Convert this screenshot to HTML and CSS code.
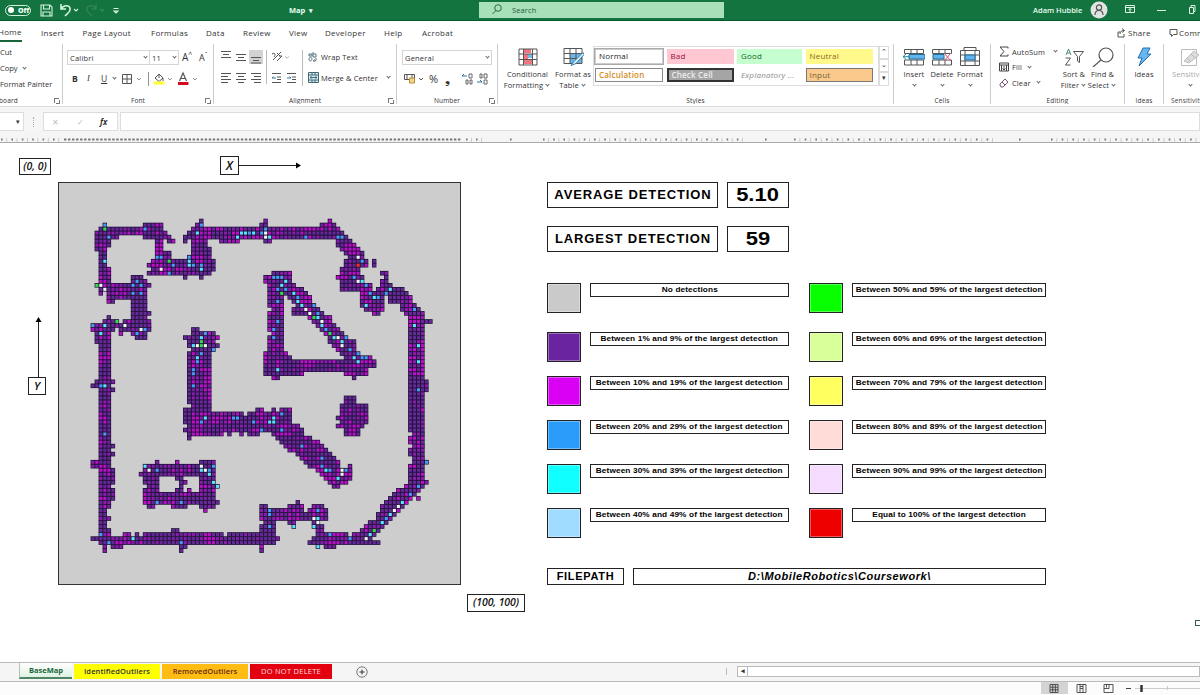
FILE: index.html
```html
<!DOCTYPE html>
<html lang="en">
<head>
<meta charset="utf-8">
<title>Map</title>
<link rel="stylesheet" href="styles.css">
</head>
<body>
<div class="app">
  <header class="titlebar">
    <span class="toggle"><i></i><b>Off</b></span>
    <svg class="qat" width="85" height="20" viewBox="38 0 85 20" fill="none" stroke="#d6f3df" stroke-width="1.1">
      <path d="M41 5h9l2 2v9H41zM43.500 5v4h6V5M43 16v-4h7v4"/>
      <path d="M61 4v5h5M61 9c3-5 10-4 9 1-.3 2-3 4-5 6" stroke-width="1.600"/><path d="M74 9l2 2 2-2"/>
      <path d="M96 4v5h-5M96 9c-3-5-10-4-9 1 .3 2 3 4 5 6M100 9l2 2 2-2" stroke="#39885a"/>
      <path d="M113.500 8.500h5M114 11l2 2 2-2z"/>
    </svg>
    <span class="doc">Map</span><span class="caret">▾</span>
    <div class="search"><svg width="10" height="11" viewBox="0 0 10 11" fill="none" stroke="#246b41"><circle cx="6" cy="4" r="3.300"/><path d="M4 6.500L.5 10"/></svg><span>Search</span></div>
    <span class="user">Adam Hubble</span>
    <svg class="avatar" width="18" height="18" viewBox="0 0 18 18"><circle cx="9" cy="9" r="8.500" fill="#e1e5e1"/><g fill="none" stroke="#555" stroke-width="1.200"><circle cx="9" cy="6.500" r="2.600"/><path d="M5 14c0-6 8-6 8 0"/></g></svg>
    <svg class="winbtns" width="76" height="20" viewBox="1124 0 76 20" fill="none" stroke="#dff5e6"><path d="M1125.500 5.500h9v7h-9zM1125.500 7.500h9M1130 12V8.500M1128.500 10l1.500-1.500 1.500 1.500M1157 10.500h9M1189.500 7.500h4v6h-4zM1191 7V5.500h4v6h-1.500"/></svg>
  </header>

  <nav class="tabs">
    <span class="active">Home</span><span>Insert</span><span>Page Layout</span><span>Formulas</span><span>Data</span><span>Review</span><span>View</span><span>Developer</span><span>Help</span><span>Acrobat</span>
    <svg width="10" height="10" viewBox="0 0 10 10" fill="none" stroke="#555"><path d="M3 4H1v5h6V6M3 6c0-3 2-3.500 4-3.500M5 .5l2.500 2L5 4.500"/></svg><span>Share</span>
    <svg width="10" height="10" viewBox="0 0 10 10" fill="none" stroke="#555"><path d="M1 1.500h7v5H4.500L2.500 8.500v-2H1z"/></svg><span>Comments</span>
  </nav>

  <section class="ribbon">
    <div class="group clipboard">
      <div class="body"><span>Cut</span><span>Copy <i class="dn"></i></span><span>Format Painter</span></div>
      <footer><span>Clipboard</span><i class="launch"></i></footer>
    </div>
    <div class="group font">
      <div class="body">
        <div class="row one"><span class="combo">Calibri<i class="dn"></i></span><span class="combo">11<i class="dn"></i></span><span class="big">A<sup>^</sup></span><span class="big small">A<sup>ˇ</sup></span></div>
        <div class="row two"><b>B</b><em>I</em><u>U</u><i class="dn"></i>
          <svg width="82" height="16" viewBox="128 69 82 16" fill="none" stroke="#555"><path d="M130.500 73.500h9v9h-9zM135 73.500v9M130.500 78h9" /><path d="M145 77l2 2 2-2M176 77l2 2 2-2M201 77l2 2 2-2M156.500 71v14" stroke="#777" stroke-width=".8"/><path d="M163 77l4-4 4 4-4 3.500zM167 73v4M171 77v3"/><path d="M161.500 82h11" stroke="#ffff32" stroke-width="3"/><path d="M187.500 80l3.500-8 3.500 8M189 77.500h4" stroke-width="1.200"/><path d="M186 82.500h10.500" stroke="#d80820" stroke-width="3"/></svg>
        </div>
      </div>
      <footer><span>Font</span><i class="launch"></i></footer>
    </div>
    <div class="group align">
      <div class="body">
        <svg width="90" height="44" viewBox="216 46 90 44" fill="none" stroke="#555">
          <path fill="#d2d2d2" stroke="none" d="M249 50h14v14h-14z"/>
          <path d="M221 51.500h10M223 54.500h6M221 57.500h10M236 54.500h10M238 57.500h6M236 60.500h10M251 57.500h10M253 60.500h6M251 63h10"/>
          <path d="M221 73.500h10M221 76.500h7M221 79.500h10M221 82.500h7M236 73.500h10M238 76.500h6M236 79.500h10M238 82.500h6M251 73.500h10M254 76.500h7M251 79.500h10M254 82.500h7"/>
          <path d="M272 73.500h9M277 77h4M277 79.500h4M272 82.500h9M287 73.500h9M292 77h4M292 79.500h4M287 82.500h9"/><path d="M276 78h-4l1.500-1.500M287 78h4l-1.500-1.500" stroke="#28769c"/>
          <path d="M273 60l8-8M277 61l5-5h-3M272 54c3-2 4 1 2 3M277 53l3 3" /><path d="M285 56.500l2 1.800 2-1.800M266.500 50v34M302.500 50v36" stroke="#999" stroke-width=".7"/>
        </svg>
        <div class="lines">
          <span><svg width="11" height="12" viewBox="0 0 11 12" fill="none" stroke="#52727d"><path d="M1 3h3v2H1zM5 1v5h3V3H5M1 8c0-2 3-2 3 0s-3 3-3 0M8 7v2c0 2-3 1-3 1l2-1.500"/></svg>Wrap Text</span>
          <span><svg width="11" height="11" viewBox="0 0 11 11" fill="#d4f1f6" stroke="#456570"><path d="M.5.5h10v10H.5zM.5 3h10M.5 8h10M4 .5V3M7 .5V3M4 8v2.500M7 8v2.500M2 5.500h7M3.500 4.500L2 5.500l1.500 1M7.500 4.500L9 5.500l-1.500 1"/></svg>Merge &amp; Center<i class="dn"></i></span>
        </div>
      </div>
      <footer><span>Alignment</span><i class="launch"></i></footer>
    </div>
    <div class="group number">
      <div class="body">
        <span class="combo">General<i class="dn"></i></span>
        <div class="numrow">
          <svg width="22" height="12" viewBox="0 0 22 12" fill="none" stroke="#555"><path d="M.5 1.500h10v5H.5zM3 1.500v5M8 1.500v5"/><path d="M5.500 5h5v5h-5z" fill="#f3d48a" stroke="#b88b35"/><path d="M15 5l2 2 2-2"/></svg>
          <span class="pct">%</span><span class="comma">❟</span>
          <svg width="28" height="12" viewBox="0 0 28 12" fill="none" stroke="#555"><path d="M7 1h3v4H7zM4 7h2v4H4zM8 7h2v4H8zM18 1h2v4h-2zM22 1h3v4h-3zM22 7h3v4h-3z" stroke-width=".9"/><path d="M5 3H0l2-2M15 9h5l-2-2" stroke="#28769c"/></svg>
        </div>
      </div>
      <footer><span>Number</span><i class="launch"></i></footer>
    </div>
    <div class="group styles">
      <div class="body">
        <div class="bigbtn cond"><svg width="20" height="18" viewBox="0 0 20 18"><path fill="#fff" d="M1 1h18v16H1z"/><path fill="#ef7580" d="M5 1h8v4H5zM5 6h5v5H5zM5 12h9v4H5z"/><path fill="#79b8e8" d="M10 6h5v4h-5z"/><path d="M1 1h18v16H1zM5.500 1v16M14.500 1v16M1 6h18M1 11.500h18" fill="none" stroke="#555"/></svg><span>Conditional<br>Formatting <i class="dn"></i></span></div>
        <div class="bigbtn tbl"><svg width="21" height="19" viewBox="0 0 21 19"><path fill="#fff" d="M1 1h18v15H1z"/><path fill="#6bb5e7" d="M7 6h12v10H7z"/><path d="M1 1h18v15H1zM7 1v15M13 1v15M1 6h18M1 11h18" fill="none" stroke="#555"/><path d="M20 5l-9 9-3 4 5-2 8-9z" fill="#dceffc" stroke="#3a7fb0"/></svg><span>Format as<br>Table <i class="dn"></i></span></div>
        <div class="gallery">
          <span class="normal">Normal</span><span class="bad">Bad</span><span class="good">Good</span><span class="neutral">Neutral</span>
          <span class="calc">Calculation</span><span class="check">Check Cell</span><span class="expl">Explanatory ...</span><span class="input">Input</span>
        </div>
        <div class="scroller"><i>⌃</i><i>⌄</i><i>▾</i></div>
      </div>
      <footer><span>Styles</span></footer>
    </div>
    <div class="group cells">
      <div class="body">
        <div class="bigbtn"><svg width="22" height="18" viewBox="0 0 22 18" fill="none" stroke="#555"><path d="M1.500 1.500h19v4h-19zM1.500 12h19v5h-19zM8 1.500v4M14 1.500v4M8 12v5M14 12v5"/><path d="M6 6.500h16v4.500H6z" fill="#60b5ef" stroke="#256da0"/><path d="M7 8.700H0L3 6M0 8.700l3 2.500" stroke="#278c94"/></svg><span>Insert<br><i class="dn"></i></span></div>
        <div class="bigbtn"><svg width="22" height="18" viewBox="0 0 22 18" fill="none" stroke="#555"><path d="M1.500 1.500h19v4h-19zM1.500 12h19v5h-19zM8 1.500v4M14 1.500v4M8 12v5M14 12v5"/><path d="M2 6.500h11v4.500H2z" fill="#60b5ef" stroke="#256da0"/><path d="M13 5l7 8M20 5l-7 8" stroke="#d8557b"/></svg><span>Delete<br><i class="dn"></i></span></div>
        <div class="bigbtn"><svg width="22" height="20" viewBox="0 0 22 20" fill="none" stroke="#555"><path d="M5 3V.5h12V3M1.500 3.500h19v15h-19zM6 3.500v15M16 3.500v15M1.500 8h19M1.500 14h19"/><path d="M6 8h10v5H6z" fill="#60b5ef" stroke="#256da0"/></svg><span>Format<br><i class="dn"></i></span></div>
      </div>
      <footer><span>Cells</span></footer>
    </div>
    <div class="group editing">
      <div class="body">
        <div class="lines">
          <span><svg width="10" height="11" viewBox="0 0 10 11" fill="none" stroke="#444"><path d="M9 2.500V1H1l4 4.500L1 10h8V8.500"/></svg>AutoSum<i class="dn far"></i></span>
          <span><svg width="10" height="10" viewBox="0 0 10 10" fill="none" stroke="#444"><path d="M.5 1h9v8h-9zM.5 3h9M5 4v4M3.500 6.500L5 8l1.500-1.500M2.500 3v6M7.500 3v6"/></svg>Fill<i class="dn"></i></span>
          <span><svg width="10" height="10" viewBox="0 0 10 10" fill="none" stroke="#765078"><path d="M1 6l5-5 3 3-5 5H2L1 7zM3 4l3 3"/></svg>Clear<i class="dn"></i></span>
        </div>
        <div class="bigbtn"><svg width="20" height="20" viewBox="0 0 20 20" fill="none" stroke="#555"><path d="M2 8l2.500-6L7 8M3 6h3" stroke="#4b8c78"/><path d="M1.500 11h5l-5 7h5M9.500 4.500h10l-4 5v6l-2-1.500V9.500z"/></svg><span>Sort &amp;<br>Filter <i class="dn"></i></span></div>
        <div class="bigbtn"><svg width="22" height="20" viewBox="0 0 22 20" fill="none" stroke="#555" stroke-width="1.200"><circle cx="14" cy="8" r="7"/><path d="M9 13l-8 7"/></svg><span>Find &amp;<br>Select <i class="dn"></i></span></div>
      </div>
      <footer><span>Editing</span></footer>
    </div>
    <div class="group ideas">
      <div class="body"><div class="bigbtn"><svg width="16" height="20" viewBox="0 0 16 20"><path d="M7 1h7l-3 6h4L3 19l3-8H2z" fill="#69b5f0" stroke="#226fae"/></svg><span>Ideas</span></div></div>
      <footer><span>Ideas</span></footer>
    </div>
    <div class="group sens">
      <div class="body"><div class="bigbtn"><svg width="20" height="20" viewBox="0 0 20 20" fill="none" stroke="#bbb"><path d="M1.500 2.500h15v16h-15z"/><path d="M4 14L14 4l5 4-10 8z" fill="#ddd"/><path d="M7 11l4 4M11 7l5 4"/></svg><span>Sensitivity<br><i class="dn"></i></span></div></div>
      <footer><span>Sensitivity</span></footer>
    </div>
  </section>

  <section class="formula">
    <div class="namebox">▾</div><i class="grip"></i>
    <div class="fx"><span>✕</span><span>✓</span><em>fx</em></div>
    <div class="entry"></div>
  </section>
  <svg class="ruler" id="ruler" width="1200" height="12"></svg>

  <main class="sheet">
    <section class="plot">
      <div class="axis-x"><span class="tag">(0, 0)</span><span class="tag axis">X</span><svg width="62" height="8" viewBox="0 0 62 8"><path d="M0 4.500h58" stroke="#222"/><path d="M57 1.500l5 3-5 3z"/></svg></div>
      <div class="plot-row">
        <div class="axis-y"><svg width="8" height="60" viewBox="0 0 8 60"><path d="M4.500 60V4" stroke="#222"/><path d="M1.500 5l3-5 3 5z"/></svg><span class="tag axis">Y</span></div>
        <svg class="map" id="map" width="403" height="403" viewBox="0 0 403 403"></svg>
      </div>
      <span class="tag end">(100, 100)</span>
    </section>
    <section class="info">
      <div class="stat"><b>AVERAGE DETECTION</b><strong><span>5.10</span></strong></div>
      <div class="stat"><b>LARGEST DETECTION</b><strong><span>59</span></strong></div>
      <div class="legend">
        <i class="sw none"></i><p><span>No detections</span></p><i class="sw p50"></i><p><span>Between 50% and 59% of the largest detection</span></p>
        <i class="sw p1"></i><p><span>Between 1% and 9% of the largest detection</span></p><i class="sw p60"></i><p><span>Between 60% and 69% of the largest detection</span></p>
        <i class="sw p10"></i><p><span>Between 10% and 19% of the largest detection</span></p><i class="sw p70"></i><p><span>Between 70% and 79% of the largest detection</span></p>
        <i class="sw p20"></i><p><span>Between 20% and 29% of the largest detection</span></p><i class="sw p80"></i><p><span>Between 80% and 89% of the largest detection</span></p>
        <i class="sw p30"></i><p><span>Between 30% and 39% of the largest detection</span></p><i class="sw p90"></i><p><span>Between 90% and 99% of the largest detection</span></p>
        <i class="sw p40"></i><p><span>Between 40% and 49% of the largest detection</span></p><i class="sw p100"></i><p><span>Equal to 100% of the largest detection</span></p>
      </div>
      <div class="path"><b>FILEPATH</b><em>D:\MobileRobotics\Coursework\</em></div>
    </section>
    <i class="cellcursor"></i>
  </main>

  <section class="sheettabs">
    <span class="t base">BaseMap</span><span class="t yellow">IdentifiedOutliers</span><span class="t orange">RemovedOutliers</span><span class="t red">DO NOT DELETE</span>
    <svg class="add" width="12" height="12" viewBox="0 0 12 12" fill="none" stroke="#777"><circle cx="6" cy="6" r="5.200"/><path d="M3.500 6h5M6 3.500v5" stroke="#333"/></svg>
    <i class="sep"></i><div class="hscroll"><b>◂</b></div>
  </section>
  <footer class="status">
    <svg width="160" height="13" viewBox="1040 0 160 13" fill="none" stroke="#444"><path fill="#d4d4d4" stroke="none" d="M1041 0h27v12h-27z"/><path d="M1050 2.500h8v8h-8zM1052.700 2.500v8M1055.400 2.500v8M1050 5.200h8M1050 7.800h8M1077 2.500h9v8h-9zM1080 2v8.500M1083 2v8.500M1080 4.500h3M1080 6.500h3M1104 2.500h9v8h-9zM1104 6.500h5v-4M1106.500 2.500v3" stroke-width=".9"/><path d="M1126 6.500h5"/><path d="M1135 6.500h65M1167.500 4v4" stroke="#ccc"/><path d="M1141.500 3v7" stroke="#333" stroke-width="2.500"/></svg>
  </footer>
</div>
<script src="map.js"></script>
</body>
</html>
```

FILE: styles.css
```css
*{box-sizing:border-box}
body{margin:0;background:#fff;overflow:hidden;font-family:"Open Sans","Noto Sans",sans-serif;color:#333;font-size:8px}
i,em{font-style:normal}
.app{width:1200px;height:695px;display:flex;flex-direction:column;overflow:hidden}
.app>*{flex:none}
svg{display:block;flex:none}
.titlebar{height:21px;background:#13743f;border-bottom:1px solid #075a2b;display:flex;align-items:center;color:#e8fff0;white-space:nowrap;font-weight:600;font-size:7.5px}
.toggle{margin-left:5px;width:26px;height:11px;border:1px solid #d4f0dd;border-radius:6px;display:flex;align-items:center;gap:4px;padding-left:2px;font-size:7px}
.toggle i{width:6px;height:6px;border-radius:50%;background:#fff}
.qat{margin-left:7px}
.doc{margin-left:166px;width:20px;font-weight:700}
.caret{width:8px;font-size:7px}
.search{margin-left:162px;width:245px;height:16px;background:#a8e0ba;display:flex;align-items:center;color:#235c3a;gap:10px;padding-left:13px;font-weight:400;margin-top:-1px;letter-spacing:.1px}
.user{margin-left:309px;width:57px}
.avatar{margin-right:16px}
.tabs{height:23px;display:grid;grid-template-columns:41px 41.500px 68.500px 55px 37px 46px 36px 59px 38px 695px 11px 41px 10px 40px;align-items:center;letter-spacing:.27px;white-space:nowrap}
.tabs .active{margin-left:-2px;width:24px;height:18px;line-height:16px;border-bottom:2px solid #17653b}
.ribbon{height:63px;display:flex;border-bottom:1px solid #ddd;white-space:nowrap}
.group{border-right:1px solid #ccc;display:flex;flex-direction:column;height:60px;overflow:hidden;flex:none}
.group .body{height:51px;flex:none;display:flex}
.group footer{height:11px;line-height:11px;font-size:6.5px;display:flex;justify-content:center;position:relative;letter-spacing:.15px}
.launch{position:absolute;right:3px;top:3px;width:5px;height:5px;border:solid #777;border-width:1px 0 0 1px}
.launch::after{content:"";position:absolute;right:-1px;bottom:-1px;width:3px;height:3px;border:solid #777;border-width:0 1px 1px 0}
.dn{display:inline-block;width:3px;height:3px;border:solid #666;border-width:0 .8px .8px 0;transform:rotate(45deg);margin:0 2px 2px 3px}
.clipboard{width:63px}
.clipboard .body{flex-direction:column;line-height:16px;font-size:7.5px}
.clipboard footer{justify-content:flex-start}
.clipboard footer span{margin-left:-13px}
.font{width:151px}.font .body{display:block;padding:6px 0 0 4px}
.row{display:flex;align-items:center}
.combo{display:flex;justify-content:space-between;align-items:center;border:1px solid #d5d5d5;height:15px;padding-left:2px;font-size:7.5px;letter-spacing:.2px}
.one .combo:first-child{width:83px}.one .combo:nth-child(2){width:29px;border-left:0}
.big{font-size:10px;margin-left:3px;line-height:15px;width:14px}.big sup{font-size:7px;line-height:0}.big.small{font-size:9px}
.two{height:26px;font-size:8.500px;padding-left:5px}
.two b{width:15px}.two em{width:14px;font-style:italic;font-family:"Liberation Serif",serif}.two u{width:9px}.two svg{margin-left:2px}
.align{width:183px}.align .body{padding:2px 0 0 2px;gap:2px}
.lines{display:flex;flex-direction:column;font-size:7.5px}
.lines>span{display:flex;align-items:center;height:21px;gap:2px;letter-spacing:.12px}
.align .dn{margin-left:7px}
.number{width:101px}.number .body{flex-direction:column;padding:6px 0 0 5px}
.number .combo{width:90px}
.numrow{display:flex;align-items:center;height:27px;padding-left:2px}
.pct{font-size:11px;width:16px;margin-left:3px}.comma{font-size:13px;width:17px;font-family:"DejaVu Sans",sans-serif}
.styles{width:396px}
.styles .body{padding-top:3px}
.bigbtn{display:flex;flex-direction:column;align-items:center;text-align:center;gap:2px;line-height:10.500px;font-size:7.5px;letter-spacing:.1px}
.bigbtn svg{height:20px}
.bigbtn .dn{margin-left:1px}
.cond{width:59px}.tbl{width:32px}
.gallery{margin:-1px 0 0 4px;width:286px;height:40px;border:1px solid #ddd;display:grid;grid-template-columns:68px 67px 65px 67px;grid-template-rows:15px 14px;gap:4px 4.500px;padding:2px 1px;font-size:8px;line-height:12px;letter-spacing:.2px}
.gallery span{padding-left:3px;border:1px solid transparent}
.gallery .normal{outline:1px solid #aaa;border-color:#ccc;color:#222}
.bad{background:#ffc7d2;color:#9c1134}.good{background:#c6ffcf;color:#16622b}.neutral{background:#fff98c;color:#8a681b}
.gallery .calc{border-color:#888;color:#d48b1c;font-weight:600}.gallery .check{border:2px solid #333;background:#a5a5a5;color:#eee;font-weight:600;line-height:10px}.gallery .expl{font-style:italic;color:#8b8b8b}.gallery .input{border-color:#777;background:#fbc98c;color:#76603b}
.gallery{column-gap:3.500px}
.scroller{width:10px;height:40px;margin-top:-1px;display:grid;grid-template-rows:13px 13px 14px}
.scroller i{border:1px solid #ddd;font-size:7px;line-height:10px;text-align:center}
.cells{width:97px}.cells .body{padding:3px 0 0 6px}.cells .bigbtn{width:28px}.cells .dn,.sens .dn{margin-left:3px}
.editing{width:134px}.editing .body{padding-left:8px}.editing .lines{width:61px}.editing .lines>span{height:15.500px;gap:3px}.editing .lines .dn{margin-left:3px}.editing .lines>span:first-child .dn{margin-left:6px}.editing .bigbtn{width:29px;padding-top:3px}.editing .bigbtn:nth-child(2){width:28px}
.ideas{width:39px}.ideas .bigbtn{width:39px;padding-top:3px}
.sens{width:60px;color:#aaa;border:0}.sens .bigbtn{width:52px;padding-top:3px}.sens footer{justify-content:flex-start;padding-left:7px;color:#444}
.formula{height:24px;background:#f6f6f6;padding-top:5px;display:flex}
.formula>div{background:#fff;border:1px solid #ddd;height:19px}
.namebox{width:24px;text-align:right;padding-right:3px;line-height:17px;font-size:7px;border-left:0!important}
.grip{width:4px;border-right:1px dotted #aaa;margin:5px 8px 4px 6px}
.fx{width:75px;display:grid;grid-template-columns:25px 23px 20px;padding-left:8px;line-height:17px;color:#bbb;margin-left:1px}
.fx em{color:#333;font-style:italic;font-weight:700}
.entry{flex:1;margin-left:2px}
.ruler{background:#f5f5f5;border-bottom:1px solid #aaa}
.sheet{height:519px;display:flex;position:relative}
.plot{width:547px;display:flex;flex-direction:column;flex:none}
.tag{border:1px solid #222;font:italic 600 10.500px/14px "Open Sans","Noto Sans",sans-serif;text-align:center;color:#111;height:17px;display:block;white-space:nowrap}
.axis-x{display:flex;height:39px;padding:13px 0 0 19px;align-items:flex-start}
.axis-x .tag{width:32px;margin-top:2px}.axis-x .tag.axis{width:19px;margin:0 0 0 169px;height:19px;font-size:12px;line-height:17px}.axis-x svg{margin-top:5px}
.plot-row{display:flex;height:403px}
.axis-y{width:58px;padding:135px 0 0 28px}.axis-y svg{margin-left:6px}.axis-y .tag{width:18px;height:18px;font-size:11.500px;line-height:16px}
.tag.end{width:58px;margin:9px 0 0 467px;height:18px;line-height:15px;letter-spacing:-.1px}
.info{width:500px;padding-top:39px;font-family:"Liberation Sans",Arial,sans-serif;color:#000}
.stat{display:grid;grid-template-columns:171px 62px;gap:9px;height:26px;margin-bottom:18px;text-align:center}
.stat>*{border:1px solid #222}
.stat b{font-size:13px;line-height:24px;letter-spacing:.9px;padding-left:1px;white-space:nowrap}
.stat strong{font-size:18px;line-height:24px}
.stat strong span{display:inline-block;transform:scaleX(1.22)}
.legend{display:grid;grid-template-columns:34px 199px 45px 194px;column-gap:9px;grid-template-rows:48.500px repeat(5,44.200px);margin-top:31px}
.legend>:nth-child(4n+3){margin-left:11px;width:34px}
.legend p{margin:0;height:14px;border:1px solid #222;display:flex;justify-content:center;font-weight:700;font-size:7px;line-height:12px;white-space:nowrap}
.legend span{letter-spacing:.1px;transform:scaleX(1.18)}
.sw{height:30px;border:1px solid #222;box-shadow:inset 0 0 0 1px #ffffff55}
.none{background:#cacaca}.p1{background:#6b24a0}.p10{background:#d900f4}.p20{background:#2b9bfa}.p30{background:#10ffff}.p40{background:#a0dcff}.p50{background:#08ff00}.p60{background:#d9ff9a}.p70{background:#ffff60}.p80{background:#ffdcd8}.p90{background:#f5dcff}.p100{background:#ee0000}
.path{display:grid;grid-template-columns:77px 413px;gap:9px;height:17px;margin-top:16px;text-align:center;line-height:15px}
.path>*{border:1px solid #222}.path b{font-size:11px;letter-spacing:.7px}.path em{font-size:11px;font-weight:700;font-style:italic;letter-spacing:.57px}
.cellcursor{position:absolute;left:1195px;top:477px;width:8px;height:6px;border:1.500px solid #345c50}
.sheettabs{height:20px;border:solid #bbb;border-width:1px 0;background:#f5f5f5;display:flex;padding-left:19px;white-space:nowrap;font-size:7.5px}
.t{height:15px;margin-top:1px;line-height:14px;text-align:center;margin-right:2px}
.base{width:53px;background:linear-gradient(#fff,#dcf2e2);color:#17653b;font-weight:700;border:solid #4e8564;border-width:0 0 2px;border-left:1px solid #bbb;margin-top:0;height:16px}
.yellow{width:86px;background:#ff0}.orange{width:86px;background:#ffbd13;color:#6b2712}.red{width:82px;background:#e3000f;color:#ffdede;letter-spacing:.25px}
.yellow,.orange{letter-spacing:.12px;font-weight:600}
.add{margin:3px 0 0 22px}.sep{width:1px;height:7px;background:#bbb;margin:5px 10px 0 358px}
.hscroll{flex:1;height:11px;border:1px solid #bbb;background:#fff;margin-top:3px;line-height:8px}
.hscroll b{display:block;width:10px;border-right:1px solid #bbb;height:9px;text-align:center;font-size:7px}
.status{height:13px;background:#fcfcfc;display:flex;justify-content:flex-end}
```

FILE: map.js
```javascript
// Occupied cells of the 100 x 100 map, as inclusive column spans per row.
const spans = {
9:'35 51 67',10:'11 21-25 34-35 50-51 65-68',11:'10-25 33-69',12:'9-26 32-70',13:'9-14 21-27 31-71',14:'9-12 24-25 27-28 31 33-36 40-44 51-52 69-72',
15:'9-12 24-25 33-36 69-73',16:'9-11 24-25 33-37 70-74',17:'10-11 24-27 33-37 71-75',18:'10-11 24-27 32-37 72-75',19:'10-11 23-38 71-76 78',20:'10-11 22-38 71-76 78',
21:'10-12 23-38 70-74',22:'10-12 22-37 53-57 70-74 80-81',23:'10-12 18-20 31 35 51-57 69-75 81',24:'10-12 18-21 51-57 70-75 80-81',25:'9-22 52-58 70-77 80-82',26:'10-21 52-60 70-77 79-85',
27:'10 12-21 52-61 75-86',28:'12-21 52-55 57-62 75-80 82-87',29:'12-13 18-21 52-55 58-62 75-80 82-87',30:'18-21 52-55 59-63 75-80 85-88',31:'18-21 53-55 58-64 76-80 85-89',32:'18-22 52-55 58-60 61-65 78-79 86-90',
33:'12 18-21 52-55 62-67 87-90',34:'11-13 14 16-22 52-55 63-67 87-92',35:'8-22 52-55 64-68 87-90',36:'8-13 15-22 33-34 52-55 65-69 87-90',37:'9-12 15 18-21 33-38 53-55 66-70 87-90',38:'9-12 19-21 31-39 52-55 67-71 87-90',
39:'9-12 32-38 52-55 67-73 87-90',40:'10-12 32-39 52-55 68-73 87-90',41:'10-12 33-38 52-55 69-73 87-90',42:'10-12 32-37 51-56 70-74 87-90',43:'10-12 32-37 51-57 71-77 87-90',44:'10-12 32-37 51-78 87-90',
45:'10-12 32-37 51-78 87-90',46:'10-12 32-37 51-76 87-90',47:'10-12 32-37 51-60 71-76 87-90',48:'10-12 32-37 53-54 73 87-90',49:'9-13 32-37 87-91',50:'8-12 32-37 87-91',51:'10-13 32-37 87-91',52:'10-12 32-37 87-90',
53:'10-12 32-37 71-73 87-90',54:'10-12 32-37 71-73 87-90',55:'10-12 33-37 70-76 87-90',56:'10-12 31-37 49-50 53 55-57 70-76 87-90',57:'10-12 31-45 47-57 70-76 87-90',58:'10-12 31-57 69-76 87-90',59:'10-12 31-57 70-76 87-90',
60:'10-12 32-59 69-75 87-90',61:'10-12 31-60 71-74 87-90',62:'10-12 32-40 42 45 47-49 53-60 71-74 88-90',63:'10-12 32 54-62 87-90',64:'10-12 55-64 87-90',65:'10-13 56-65 88-90',66:'10-12 57-66 87-90',67:'10-13 59-67 87-90',
68:'10-12 60-68 88-90',69:'8-12 24 29 35-38 61-69 88-91',70:'8-12 21-38 62-69 72 87-90',71:'10-13 21-38 64-72 87-90',72:'10-13 20-38 65-72 87-90',73:'10-13 21-24 29-30 35-38 66-72 87-90',74:'10-13 21-24 30-31 35-38 67-71 87-91',
75:'10-12 22-24 30 35-39 68-69 86-90',76:'10-13 21-24 29-30 32 35-38 84-89',77:'10-13 21-38 83-88',78:'10-13 21-38 82-87 89',79:'10-12 21-39 59 81-86',80:'10-12 22-23 28-31 35-38 50-51 57-60 63-65 80-85',
81:'10-11 36 50-60 62-66 80-84',82:'10-11 50-66 79-83',83:'10-12 50-57 58-66 79-82',84:'10-11 51-53 57-58 63-64 77-81',85:'10-11 50-53 58 63-65 76-80',86:'10-12 28-29 50-53 64-65 75-79',87:'10-12 16-17 19 21-40 42-53 64-71 73-78',
88:'8-54 63-77',89:'10-53 62-79',90:'11 13-15 30-31 50 64 66-68',91:'11 30 50'};

// Cells above the 20% bands, by colour class: column,row pairs.
const marks = {
b:'11,10 12,13 21,11 18,25 19,24 20,25 20,27 18,27 24,18 25,18 28,20 27,22 32,18 33,20 35,20 35,10 47,12 8,35 21,36 19,37 36,37 38,41 35,42 34,44 33,46 33,47 33,50 51,11 61,13 69,13 70,13 75,19 73,23 76,25 77,27 79,28 81,27 88,31 53,23 54,23 55,23 54,26 56,26 54,29 59,28 63,30 64,32 66,36 71,38 72,41 74,42 75,43 76,43 54,34 53,36 53,38 10,50 11,62 35,59 43,58 44,58 48,59 55,57 55,61 50,61 60,65 65,68 65,70 67,71 71,71 24,71 37,71 38,70 24,79 30,79 10,87 12,89 30,89 52,81 52,82 52,85 64,81 67,87 72,88 81,83 87,77 89,75 89,51 91,69 50,12',
c:'11,19 32,19 32,20 35,21 34,12 44,13 45,12 46,12 48,12 11,35 10,37 35,38 33,40 34,43 52,13 75,24 78,28 82,26 76,30 88,35 89,40 89,44 56,24 55,25 58,27 59,29 60,30 64,33 65,35 68,38 70,39 73,43 74,44 54,46 11,50 36,58 52,59 53,59 53,58 66,71 70,70 69,73 21,70 35,71 37,72 38,74 39,75 18,88 58,85 64,83 63,85 64,90 77,87 80,84 82,82 85,79',
g:'11,11 9,25 27,19 14,34 35,39 35,40 55,27 63,33 67,37 78,86',
w:'10,25 11,26 25,21 16,35 20,36 34,40 36,40 51,13 51,12 74,18 74,24 61,31 62,32 65,34 69,38 70,40 70,71 70,72 22,71 35,70 36,71 63,83 64,84 76,88 83,81 84,80',
r:'74,20'};
const colour = {b:'#489cf5',c:'#5be4fa',g:'#36dc4c',w:'#f2f7f4',r:'#f03220'};
const special = {};
for (const k in marks) marks[k].split(' ').forEach(p => special[p] = colour[k]);

const noise = (x, y) => { const n = Math.sin(x * 127.1 + y * 311.7) * 43758.5453; return n - Math.floor(n); };
let out = '<rect x="0.5" y="0.5" width="402" height="402" fill="#cdcdcd" stroke="#333"/>';
let base = '', cells = '';
for (const r in spans) for (const run of spans[r].split(' ')) {
  const [a, b = a] = run.split('-').map(Number);
  base += `<rect x="${(a * 4.02 + .4).toFixed(1)}" y="${(r * 4.02 + .5).toFixed(1)}" width="${((b - a + 1) * 4.02 + .4).toFixed(1)}" height="4.6"/>`;
  for (let c = a; c <= b; c++) {
    const hot = noise(c, r) * .55 + noise(Math.floor(c / 3), Math.floor(r / 3)) * .45;
    const fill = special[c + ',' + r] || (hot > .68 ? '#b90fc6' : hot > .54 ? '#8a1cac' : '#652994');
    cells += `<rect x="${(c * 4.02 + 1.1).toFixed(1)}" y="${(r * 4.02 + 1.3).toFixed(1)}" width="3.1" height="3.1" fill="${fill}"/>`;
  }
}
document.getElementById('map').innerHTML = out + '<g fill="#1e1038">' + base + '</g>' + cells;

// Column header dots and separators.
let marksOut = '';
const dots = (from, to, step, tick, w = 1.6) => {
  for (let x = from; x < to; x += step) {
    marksOut += `<rect x="${x}" y="7.500" width="${w}" height="2" fill="#777"/>`;
    if (tick) marksOut += `<rect x="${x + step / 2}" y="7" width="1" height="4" fill="#ccc"/>`;
  }
};
dots(1, 60, 10.4, true); dots(64, 461, 4.02, false, 2.4); dots(466, 480, 10, true);
dots(510, 511, 9, false); dots(543, 738, 10.2, true); dots(765, 766, 9, false);
dots(794, 992, 10.7, true); dots(1019, 1020, 9, false); dots(1051, 1195, 10.7, true);
document.getElementById('ruler').innerHTML = marksOut;
```
